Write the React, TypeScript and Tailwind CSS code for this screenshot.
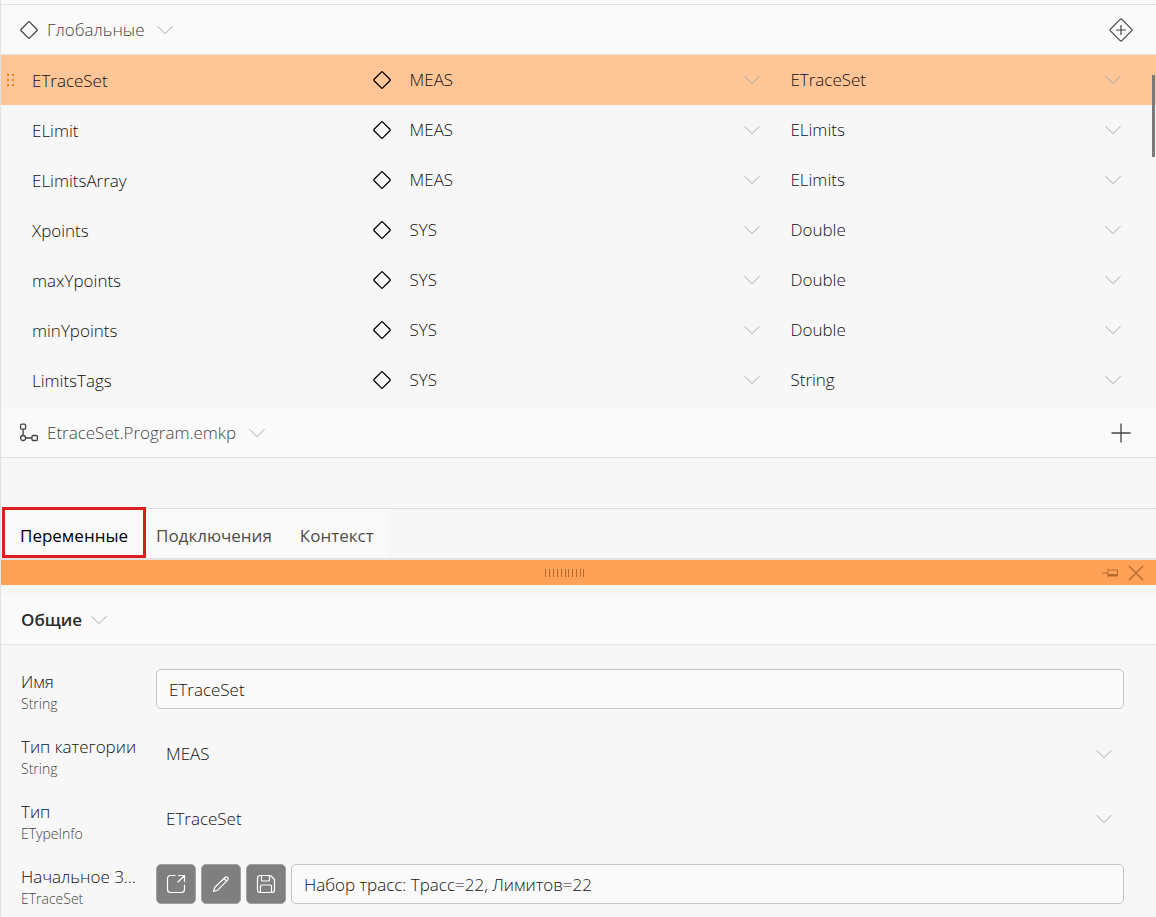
import clsx from 'clsx';
import { useState } from 'react';
import type { ReactNode } from 'react';

interface Variable {
  name: string;
  category: string;
  type: string;
}

const VARIABLES: Variable[] = [
  { name: 'ETraceSet', category: 'MEAS', type: 'ETraceSet' },
  { name: 'ELimit', category: 'MEAS', type: 'ELimits' },
  { name: 'ELimitsArray', category: 'MEAS', type: 'ELimits' },
  { name: 'Xpoints', category: 'SYS', type: 'Double' },
  { name: 'maxYpoints', category: 'SYS', type: 'Double' },
  { name: 'minYpoints', category: 'SYS', type: 'Double' },
  { name: 'LimitsTags', category: 'SYS', type: 'String' },
];

const CATEGORIES = ['MEAS', 'SYS'];
const TYPES = ['ETraceSet', 'ELimits', 'Double', 'String'];
const TABS = ['Переменные', 'Подключения', 'Контекст'];

function Chevron({ className }: { className?: string }) {
  return (
    <svg className={clsx('h-[10px] w-[18px] shrink-0', className)} viewBox="0 0 18 10" fill="none" stroke="currentColor">
      <path d="M1.5 1.2 9 8.7l7.5-7.5" />
    </svg>
  );
}

function Diamond({ className }: { className?: string }) {
  return (
    <svg className={clsx('size-5 shrink-0', className)} viewBox="0 0 20 20" fill="none" stroke="currentColor" strokeWidth="1.3">
      <path d="M9.3 2.1 2.1 9.3a1 1 0 0 0 0 1.4l7.2 7.2a1 1 0 0 0 1.4 0l7.2-7.2a1 1 0 0 0 0-1.4l-7.2-7.2a1 1 0 0 0-1.4 0Z" />
    </svg>
  );
}

function DiamondPlus() {
  return (
    <svg className="size-6" viewBox="0 0 24 24" fill="none" stroke="currentColor" strokeWidth="1.2">
      <path d="M11.4 1.2 1.2 11.4a.9.9 0 0 0 0 1.2l10.2 10.2a.9.9 0 0 0 1.2 0l10.2-10.2a.9.9 0 0 0 0-1.2L12.6 1.2a.9.9 0 0 0-1.2 0Z" />
      <path d="M12 7v10M7 12h10" />
    </svg>
  );
}

function ProgramIcon() {
  return (
    <svg className="size-5 shrink-0" viewBox="0 0 20 20" fill="none" stroke="currentColor" strokeWidth="1.3">
      <rect x="1.6" y="1.2" width="5" height="5" rx="1" />
      <circle cx="4.1" cy="15" r="2.5" />
      <rect x="13" y="12.5" width="5.4" height="5" rx="1" />
      <path d="M4.1 6.2v6.3M6.6 15H13" />
    </svg>
  );
}

function Grip() {
  return (
    <svg className="h-3 w-2" viewBox="0 0 8 12" fill="#f08019">
      <path d="M0 0h2v2H0zM5 0h2v2H5zM0 5h2v2H0zM5 5h2v2H5zM0 10h2v2H0zM5 10h2v2H5z" />
    </svg>
  );
}

interface SelectFieldProps {
  id?: string;
  label?: string;
  value: string;
  options: string[];
  onChange: (value: string) => void;
}

function SelectField({ id, label, value, options, onChange }: SelectFieldProps) {
  return (
    <div className="grid min-w-0 flex-1 items-center">
      <select
        id={id}
        aria-label={label}
        value={value}
        onChange={(event) => onChange(event.target.value)}
        className="col-start-1 row-start-1 h-10 w-full appearance-none bg-transparent px-[10px] outline-none"
      >
        {options.map((option) => (
          <option key={option}>{option}</option>
        ))}
      </select>
      <Chevron className="pointer-events-none col-start-1 row-start-1 mr-[11px] justify-self-end text-[#a8a8a8]" />
    </div>
  );
}

interface SectionHeaderProps {
  title: string;
  icon?: ReactNode;
  action?: ReactNode;
  bold?: boolean;
}

function SectionHeader({ title, icon, action, bold }: SectionHeaderProps) {
  return (
    <div className="flex h-[50px] items-center justify-between border-b border-[#e0e0e0] bg-[#fafafa] pr-[23px] pl-[18px]">
      <button
        type="button"
        className={clsx('flex items-center', bold ? 'gap-1 pl-0.5 font-semibold text-[#2b2b2b]' : 'gap-2 text-[#444444]')}
      >
        {icon}
        {title}
        <Chevron className="ml-1 text-[#a8a8a8]" />
      </button>
      {action}
    </div>
  );
}

function FieldRow({ id, label, type, children }: { id: string; label: string; type: string; children: ReactNode }) {
  return (
    <div className="flex h-10 items-center gap-[5px]">
      <label htmlFor={id} className="w-[130px] shrink-0 pt-1.5">
        <span className="block truncate leading-6">{label}</span>
        <span className="block text-sm leading-5 text-[#444444]">{type}</span>
      </label>
      {children}
    </div>
  );
}

function ToolButton({ label, children }: { label: string; children: ReactNode }) {
  return (
    <button
      type="button"
      aria-label={label}
      className="flex size-10 shrink-0 items-center justify-center rounded-[5px] border border-[#a0a0a0] bg-[#7f7f7f] text-white"
    >
      <svg
        className="size-5"
        viewBox="0 0 20 20"
        fill="none"
        stroke="currentColor"
        strokeWidth="1.2"
        strokeLinecap="round"
        strokeLinejoin="round"
      >
        {children}
      </svg>
    </button>
  );
}

export default function App() {
  const [variables, setVariables] = useState(VARIABLES);
  const [selected, setSelected] = useState(0);
  const [activeTab, setActiveTab] = useState(TABS[0]);
  const current = variables[selected];

  const update = (index: number, patch: Partial<Variable>) => {
    setVariables(variables.map((variable, i) => (i === index ? { ...variable, ...patch } : variable)));
  };

  return (
    <div className="min-h-screen border-l border-[#e2e2e2] bg-[#f7f7f7] font-['Open_Sans','Noto_Sans',sans-serif] text-[17px] font-light text-[#111111]">
      <div className="h-[5px] border-b border-[#e0e0e0] bg-[#fafafa]" />
      <SectionHeader
        title="Глобальные"
        icon={<Diamond />}
        action={
          <button type="button" aria-label="Добавить переменную" className="text-[#444444]">
            <DiamondPlus />
          </button>
        }
      />

      <div className="relative pb-[3px]">
        <table className="w-full table-fixed">
          <colgroup>
            <col className="w-[31px]" />
            <col className="w-[29.4%]" />
            <col className="w-[35.4%]" />
            <col />
          </colgroup>
          <tbody>
            {variables.map((variable, index) => (
              <tr key={index} onClick={() => setSelected(index)} className={clsx('h-[50px]', index === selected && 'bg-[#fec597]')}>
                <td className="pl-[6px]">{index === selected ? <Grip /> : null}</td>
                <td>
                  <input
                    aria-label="Имя переменной"
                    value={variable.name}
                    onChange={(event) => update(index, { name: event.target.value })}
                    className="h-10 w-full bg-transparent outline-none"
                  />
                </td>
                <td>
                  <div className="flex items-center gap-2 pr-2">
                    <Diamond className="text-black" />
                    <SelectField
                      label="Тип категории переменной"
                      value={variable.category}
                      options={CATEGORIES}
                      onChange={(category) => update(index, { category })}
                    />
                  </div>
                </td>
                <td>
                  <div className="flex pr-[23px]">
                    <SelectField
                      label="Тип переменной"
                      value={variable.type}
                      options={TYPES}
                      onChange={(type) => update(index, { type })}
                    />
                  </div>
                </td>
              </tr>
            ))}
          </tbody>
        </table>
        <div className="absolute top-5 right-px h-[82px] w-[3px] bg-[#7a7a7a]" />
      </div>

      <SectionHeader
        title="EtraceSet.Program.emkp"
        icon={<ProgramIcon />}
        action={
          <button type="button" aria-label="Добавить" className="text-[#444444]">
            <svg className="size-6" viewBox="0 0 24 24" fill="none" stroke="currentColor" strokeWidth="1.3">
              <path d="M12 2.5v19M2.5 12h19" />
            </svg>
          </button>
        }
      />

      <div className="mt-[50px] flex h-[52px] border-t border-b-2 border-t-[#dedede] border-b-[#e2e2e2]">
        <div role="tablist" className="flex bg-[#fafafa] pl-[5px]">
          {TABS.map((tab) => (
            <button
              key={tab}
              type="button"
              role="tab"
              aria-selected={tab === activeTab}
              onClick={() => setActiveTab(tab)}
              className={clsx('relative px-[14px] pt-1 font-medium', tab === activeTab ? 'text-black' : 'text-[#4d4d4d]')}
            >
              {tab}
              {tab === activeTab ? (
                <span className="absolute -inset-x-1 -top-[2px] bottom-0 border-[3px] border-[#dd1f1f]" />
              ) : null}
            </button>
          ))}
        </div>
      </div>

      <div className="grid h-[25px] grid-cols-[1fr_auto_1fr] items-center bg-[#ffa157] pr-3 text-[#b36a30]">
        <svg className="col-start-2 mr-4 h-2 w-10" viewBox="0 0 40 8" fill="none" stroke="currentColor">
          <path d="M.5 0v8M4.5 0v8M8.5 0v8M12.5 0v8M16.5 0v8M20.5 0v8M23.5 0v8M27.5 0v8M31.5 0v8M35.5 0v8M38.5 0v8" />
        </svg>
        <div className="flex items-center justify-end gap-[10px]">
          <button type="button" aria-label="Закрепить">
            <svg className="h-[10px] w-4" viewBox="0 0 16 10" fill="none" stroke="currentColor">
              <path d="M0 5h6M6 .5v9M6 2h9.5v6H6" />
              <path d="M6 7h9.5" strokeWidth="2" />
            </svg>
          </button>
          <button type="button" aria-label="Закрыть">
            <svg className="size-4" viewBox="0 0 16 16" fill="none" stroke="currentColor" strokeWidth="1.4">
              <path d="m1 1 14 14M15 1 1 15" />
            </svg>
          </button>
        </div>
      </div>

      <div className="pt-[10px]">
        <SectionHeader title="Общие" bold />
      </div>

      <form className="flex flex-col gap-[25px] pt-6 pr-8 pb-3 pl-5" onSubmit={(event) => event.preventDefault()}>
        <FieldRow id="name" label="Имя" type="String">
          <input
            id="name"
            value={current.name}
            onChange={(event) => update(selected, { name: event.target.value })}
            className="h-10 min-w-0 flex-1 rounded-[5px] border border-[#c4c4c4] bg-[#fafafa] px-3 outline-none"
          />
        </FieldRow>
        <FieldRow id="category" label="Тип категории" type="String">
          <SelectField
            id="category"
            value={current.category}
            options={CATEGORIES}
            onChange={(category) => update(selected, { category })}
          />
        </FieldRow>
        <FieldRow id="type" label="Тип" type="ETypeInfo">
          <SelectField id="type" value={current.type} options={TYPES} onChange={(type) => update(selected, { type })} />
        </FieldRow>
        <FieldRow id="initial" label="Начальное З..." type="ETraceSet">
          <ToolButton label="Открыть">
            <path d="M9 1.5H4.5a3 3 0 0 0-3 3v11a3 3 0 0 0 3 3h11a3 3 0 0 0 3-3V11" />
            <path d="m12 8 6.5-6.5M12.5 1.5h6v6" />
          </ToolButton>
          <ToolButton label="Изменить">
            <path d="m2.5 17.5 1.3-4.3L14.2 3.3a1.6 1.6 0 0 1 2.3 0l.2.2a1.6 1.6 0 0 1 0 2.3L6.800 16.200 2.500 17.500Z" />
            <path d="m13 4.500 2.500 2.500" />
          </ToolButton>
          <ToolButton label="Сохранить">
            <path d="M4 1.5h10.500l4 4V16a2.500 2.500 0 0 1-2.500 2.500H4A2.500 2.500 0 0 1 1.500 16V4A2.500 2.500 0 0 1 4 1.500Z" />
            <path d="M5.500 1.500V6a1 1 0 0 0 1 1h6a1 1 0 0 0 1-1V1.500M4.500 18.500V12a1 1 0 0 1 1-1h9a1 1 0 0 1 1 1v6.500" />
          </ToolButton>
          <input
            id="initial"
            defaultValue="Набор трасс: Трасс=22, Лимитов=22"
            className="h-10 min-w-0 flex-1 rounded-[5px] border border-[#c4c4c4] bg-[#fafafa] px-3 outline-none"
          />
        </FieldRow>
      </form>
    </div>
  );
}
